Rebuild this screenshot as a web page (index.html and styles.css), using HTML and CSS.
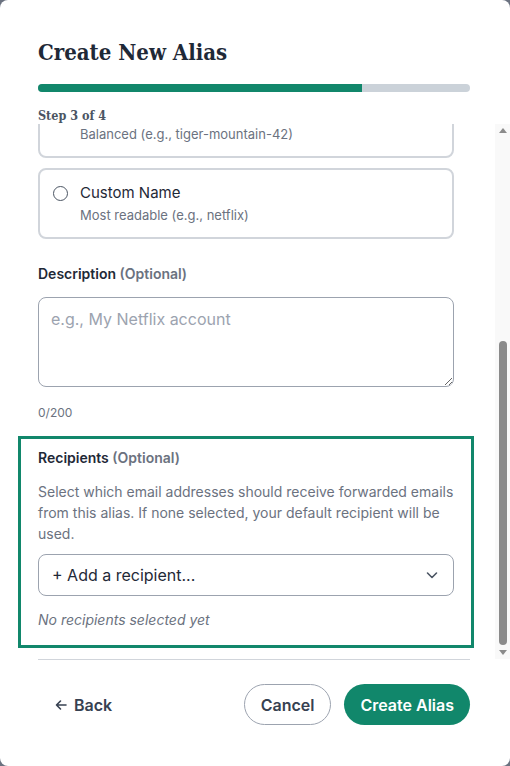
FILE: index.html
```html
<!DOCTYPE html>
<html lang="en">
<head>
    <meta charset="UTF-8">
    <meta name="viewport" content="width=device-width, initial-scale=1.0">
    <title>Create New Alias</title>
    <link rel="stylesheet" href="styles.css">
</head>
<body>
    <div class="modal">
        <div class="modal-header">
            <h1>Create New Alias</h1>
            <div class="progress"><div class="progress-fill" style="width: 75%"></div></div>
            <div class="step">Step 3 of 4</div>
        </div>

        <div class="modal-main">
            <div class="modal-body" id="modalBody">
                <div class="field">
                    <label class="label">Domain</label>
                    <div class="select">
                        <span>relay.example.com</span>
                        <svg width="14" height="14" viewBox="0 0 14 14"><polyline points="2.5,5 7,9.5 11.5,5" fill="none" stroke="#4b5563" stroke-width="1.6" stroke-linecap="round" stroke-linejoin="round"/></svg>
                    </div>
                    <p class="hint">Your alias will be created on this domain. Custom domains can be added in settings.</p>
                </div>

                <div class="field">
                    <label class="label">Alias Format</label>
                    <p class="help">Pick how the local part of your new address is generated. You can't change this later.</p>
                    <div class="options">
                        <label class="option">
                            <input type="radio" name="format">
                            <span class="option-text">
                                <span class="option-title">Random</span>
                                <span class="option-desc">Most private (e.g., x7k2m9p4)</span>
                            </span>
                        </label>
                        <label class="option">
                            <input type="radio" name="format">
                            <span class="option-text">
                                <span class="option-title">Memorable</span>
                                <span class="option-desc">Balanced (e.g., tiger-mountain-42)</span>
                            </span>
                        </label>
                        <label class="option">
                            <input type="radio" name="format">
                            <span class="option-text">
                                <span class="option-title">Custom Name</span>
                                <span class="option-desc">Most readable (e.g., netflix)</span>
                            </span>
                        </label>
                    </div>
                </div>

                <div class="field field-desc">
                    <label class="label">Description <span class="optional">(Optional)</span></label>
                    <textarea class="textarea" placeholder="e.g., My Netflix account"></textarea>
                    <p class="counter">0/200</p>
                </div>

                <div class="recipients">
                    <label class="label">Recipients <span class="optional">(Optional)</span></label>
                    <p class="help">Select which email addresses should receive forwarded emails from this alias. If none selected, your default recipient will be used.</p>
                    <div class="select">
                        <span>+ Add a recipient...</span>
                        <svg width="14" height="14" viewBox="0 0 14 14"><polyline points="2.5,5 7,9.5 11.5,5" fill="none" stroke="#4b5563" stroke-width="1.6" stroke-linecap="round" stroke-linejoin="round"/></svg>
                    </div>
                    <p class="empty">No recipients selected yet</p>
                </div>
            </div>

            <div class="scrollbar">
                <div class="scroll-btn">
                    <svg width="8" height="5" viewBox="0 0 8 5"><polygon points="4,0 8,5 0,5" fill="#8b8b8b"/></svg>
                </div>
                <div class="scroll-track" id="scrollTrack">
                    <div class="scroll-thumb" id="scrollThumb"></div>
                </div>
                <div class="scroll-btn">
                    <svg width="8" height="5" viewBox="0 0 8 5"><polygon points="0,0 8,0 4,5" fill="#8b8b8b"/></svg>
                </div>
            </div>
        </div>

        <div class="modal-footer">
            <button class="btn-back">
                <svg width="12" height="12" viewBox="0 0 12 12"><path d="M11 6H1.5M5.5 2L1.5 6l4 4" fill="none" stroke="#374151" stroke-width="1.6" stroke-linecap="round" stroke-linejoin="round"/></svg>
                Back
            </button>
            <div class="actions">
                <button class="btn-outline">Cancel</button>
                <button class="btn-primary">Create Alias</button>
            </div>
        </div>
    </div>

    <script>
        const body = document.getElementById('modalBody');
        const track = document.getElementById('scrollTrack');
        const thumb = document.getElementById('scrollThumb');

        function updateThumb() {
            const ratio = body.clientHeight / body.scrollHeight;
            const h = Math.round(track.clientHeight * ratio);
            const max = body.scrollHeight - body.clientHeight;
            const pos = max > 0 ? body.scrollTop / max : 0;
            thumb.style.height = h + 'px';
            thumb.style.marginTop = Math.round(pos * (track.clientHeight - h)) + 'px';
        }

        // keep the recipients section in view
        body.scrollTop = body.scrollHeight;
        updateThumb();
        body.addEventListener('scroll', updateThumb);
    </script>
</body>
</html>
```

FILE: styles.css
```css
* {
    box-sizing: border-box;
}
body {
    margin: 0;
    background-color: #6b7280;
    font-family: Inter, "Noto Sans", sans-serif;
    color: #1f2937;
}
.modal {
    height: 766px;
    background-color: #ffffff;
    border-radius: 8px;
    display: flex;
    flex-direction: column;
    overflow: hidden;
}
.modal-header {
    padding: 38px 40px 0 38px;
}
.modal-header h1 {
    margin: 0;
    font-family: "DejaVu Serif", serif;
    font-stretch: semi-condensed;
    font-size: 22px;
    line-height: 28px;
    font-weight: bold;
    color: #1f2937;
}
.progress {
    margin-top: 18px;
    height: 8px;
    border-radius: 4px;
    background-color: #cbd2d9;
    overflow: hidden;
}
.progress-fill {
    height: 100%;
    background-color: #11876b;
}
.step {
    margin-top: 16px;
    font-family: "DejaVu Serif", serif;
    font-stretch: semi-condensed;
    font-size: 12.5px;
    font-weight: bold;
    line-height: 16px;
    color: #4b5563;
}

/* scrolling form area */
.modal-main {
    flex: 1;
    min-height: 0;
    display: flex;
}
.modal-body {
    flex: 1;
    overflow: hidden;
    padding: 12px 41px 11px 38px;
}
.scrollbar {
    width: 15px;
    display: flex;
    flex-direction: column;
    background-color: #f9f9f9;
}
.scroll-btn {
    height: 15px;
    display: flex;
    align-items: center;
    justify-content: center;
}
.scroll-track {
    flex: 1;
    padding: 0 3px 2px 4px;
}
.scroll-thumb {
    width: 8px;
    border-radius: 4px;
    background-color: #8b8b8b;
}

.field {
    margin-bottom: 25px;
}
.label {
    display: block;
    font-size: 14px;
    font-weight: 600;
    line-height: 20px;
    color: #1f2937;
    margin-bottom: 13px;
}
.optional {
    color: #6b7280;
}
.help {
    margin: 0 0 10px;
    font-size: 14px;
    line-height: 21px;
    color: #6b7280;
}
.hint {
    margin: 6px 0 0;
    font-size: 12px;
    line-height: 18px;
    color: #6b7280;
}
.options {
    display: flex;
    flex-direction: column;
    gap: 10px;
}
.option {
    display: flex;
    align-items: flex-start;
    gap: 12px;
    padding: 13px;
    border: 2px solid #d1d5db;
    border-radius: 8px;
    cursor: pointer;
}
.option input {
    appearance: none;
    margin: 3px 0 0;
    width: 15px;
    height: 15px;
    border: 1px solid #4b5563;
    border-radius: 50%;
    flex-shrink: 0;
}
.option-text {
    display: flex;
    flex-direction: column;
    gap: 3px;
}
.option-title {
    font-size: 15px;
    line-height: 20px;
    color: #1f2937;
}
.option-desc {
    font-size: 13px;
    line-height: 18px;
    color: #6b7280;
}
.textarea {
    display: block;
    width: 100%;
    height: 90px;
    padding: 10px 12px;
    border: 1px solid #9ca3af;
    border-radius: 8px;
    font-family: Inter, "Noto Sans", sans-serif;
    font-size: 16px;
    line-height: 22px;
    color: #1f2937;
}
.textarea::placeholder {
    color: #9ca3af;
}
.counter {
    margin: 17px 0 0;
    font-size: 12px;
    line-height: 18px;
    color: #6b7280;
}
.field-desc {
    margin-bottom: 14px;
}

/* highlighted recipients block */
.recipients {
    margin: 0 -20px;
    padding: 9px 17px 15px;
    border: 3px solid #11876b;
}
.select {
    display: flex;
    align-items: center;
    justify-content: space-between;
    height: 42px;
    padding: 0 14px 0 13px;
    border: 1px solid #9ca3af;
    border-radius: 8px;
    font-size: 16px;
    color: #1f2937;
}
.empty {
    margin: 14px 0 0;
    font-size: 14px;
    line-height: 20px;
    font-style: italic;
    color: #6b7280;
}

/* footer buttons */
.modal-footer {
    margin: 0 40px 0 38px;
    border-top: 1px solid #d1d5db;
    padding: 24px 0 41px;
    display: flex;
    align-items: center;
    justify-content: space-between;
}
.modal-footer button {
    font-family: Inter, "Noto Sans", sans-serif;
    font-size: 16px;
    font-weight: 600;
    height: 41px;
    border-radius: 21px;
    cursor: pointer;
}
.btn-back {
    display: flex;
    align-items: center;
    gap: 7px;
    padding: 0 17px;
    background: none;
    border: none;
    color: #374151;
}
.actions {
    display: flex;
    gap: 13px;
}
.btn-outline {
    padding: 0 16px;
    background-color: #ffffff;
    border: 1px solid #9ca3af;
    color: #374151;
}
.btn-primary {
    padding: 0 16px;
    background-color: #11876b;
    border: none;
    color: #ffffff;
}
```
